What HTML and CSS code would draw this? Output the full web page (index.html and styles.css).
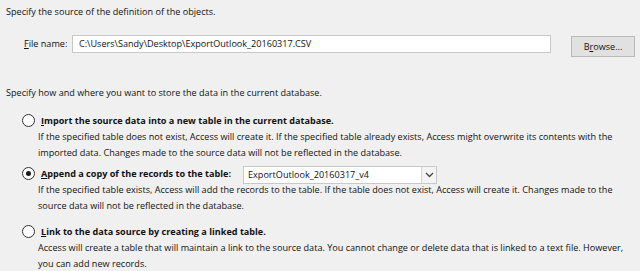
FILE: index.html
```html
<!DOCTYPE html>
<html>
<head>
<meta charset="utf-8">
<link rel="stylesheet" href="styles.css">
</head>
<body>
<div class="dialog">
  <p class="intro">Specify the source of the definition of the objects.</p>
  <div class="file-row">
    <label class="file-label"><u>F</u>ile name:</label>
    <div class="textbox">C:\Users\Sandy\Desktop\ExportOutlook_20160317.CSV</div>
    <button class="btn">B<u>r</u>owse...</button>
  </div>
  <p class="intro2">Specify how and where you want to store the data in the current database.</p>
  <div class="option opt1">
    <div class="opt-head">
      <span class="radio"></span>
      <span class="opt-label"><u>I</u>mport the source data into a new table in the current database.</span>
    </div>
    <p class="desc">If the specified table does not exist, Access will create it. If the specified table already exists, Access might overwrite its contents with the imported data. Changes made to the source data will not be reflected in the database.</p>
  </div>
  <div class="option opt2">
    <div class="opt-head">
      <span class="radio checked"></span>
      <span class="opt-label"><u>A</u>ppend a copy of the records to the table:</span>
      <div class="combo">
        <span class="combo-text">ExportOutlook_20160317_v4</span>
        <span class="combo-btn"><svg width="9" height="6" viewBox="0 0 9 6"><path d="M1 1 L4.5 4.5 L8 1" fill="none" stroke="#444" stroke-width="1.3"/></svg></span>
      </div>
    </div>
    <p class="desc">If the specified table exists, Access will add the records to the table. If the table does not exist, Access will create it. Changes made to the source data will not be reflected in the database.</p>
  </div>
  <div class="option opt3">
    <div class="opt-head">
      <span class="radio"></span>
      <span class="opt-label"><u>L</u>ink to the data source by creating a linked table.</span>
    </div>
    <p class="desc">Access will create a table that will maintain a link to the source data. You cannot change or delete data that is linked to a text file. However, you can add new records.</p>
  </div>
</div>
</body>
</html>
```
FILE: styles.css
```css
html, body {
  margin: 0;
  padding: 0;
  background: #f0f0f0;
}
body {
  font-family: "Open Sans", "Noto Sans", sans-serif;
  font-size: 9.1px;
  color: #111;
  width: 640px;
  height: 271px;
  overflow: hidden;
}
.dialog {
  padding: 5px 5px 0 6px;
}
p { margin: 0; }
.intro {
  line-height: 14px;
}
.file-row {
  display: flex;
  align-items: flex-start;
  margin-top: 16px;
}
.file-label {
  margin-left: 18px;
  width: 48px;
  line-height: 18px;
}
.textbox {
  width: 471px;
  height: 16px;
  line-height: 16px;
  background: #fff;
  border: 1px solid #c8c8c8;
  padding-left: 6px;
}
.btn {
  margin-left: 20px;
  margin-top: 1px;
  width: 64px;
  height: 21px;
  background: #e1e1e1;
  border: 1px solid #b9b9b9;
  font-family: inherit;
  font-size: 9.1px;
  color: #111;
  padding: 0;
}
.intro2 {
  margin-top: 29px;
  line-height: 14px;
}
.option {
  padding-left: 16px;
}
.opt1 { margin-top: 11px; }
.opt2 { margin-top: 4px; }
.opt3 { margin-top: 9px; }
.opt-head {
  display: flex;
  align-items: center;
  height: 18px;
}
.radio {
  width: 11px;
  height: 11px;
  border: 1px solid #333;
  border-radius: 50%;
  background: #fff;
  box-sizing: content-box;
  position: relative;
  flex: none;
}
.radio.checked::after {
  content: "";
  position: absolute;
  left: 3px;
  top: 3px;
  width: 5px;
  height: 5px;
  border-radius: 50%;
  background: #1a1a1a;
}
.opt-label {
  font-weight: bold;
  margin-left: 6px;
}
.combo {
  display: flex;
  margin-left: 12px;
  margin-top: 4px;
  width: 192px;
  height: 16px;
  background: #fff;
  border: 1px solid #c8c8c8;
}
.combo-text {
  flex: 1;
  line-height: 16px;
  padding-left: 4px;
}
.combo-btn {
  width: 14px;
  border-left: 1px solid #d4d4d4;
  background: #f4f4f4;
  display: flex;
  align-items: center;
  justify-content: center;
}
.desc {
  margin-left: 16px;
  line-height: 15.5px;
}
```
